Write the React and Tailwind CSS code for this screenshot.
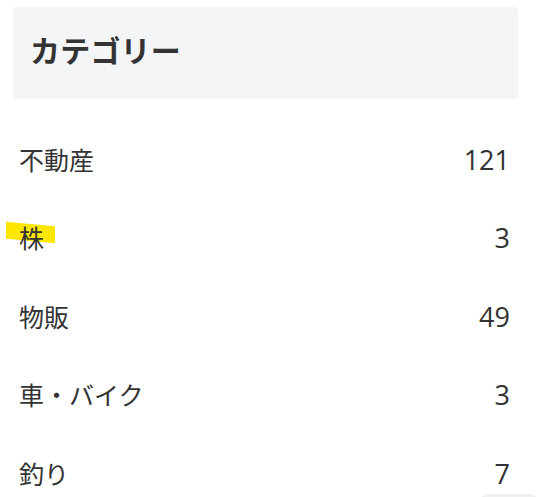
export default function App() {
  const rows = [
    { name: "不動産", count: 121 },
    { name: "株", count: 3, mark: true },
    { name: "物販", count: 49 },
    { name: "車・バイク", count: 3 },
    { name: "釣り", count: 7 },
  ];
  return (
    <div
      className="relative w-[546px] h-[497px] overflow-hidden bg-white text-[#333]"
      style={{ fontFamily: '"Noto Sans CJK JP", "Noto Sans", sans-serif' }}
    >
      <div className="pl-[13px] pt-[7px] w-[518px]">
        <div className="h-[92px] rounded bg-[#f4f5f7] flex items-center pl-[17px] pb-[8px]">
          <h2 className="text-[30px] font-bold leading-none tracking-[0.2px]">カテゴリー</h2>
        </div>
        <ul className="mt-[21px]">
          {rows.map((r) => (
            <li
              key={r.name}
              className="h-[78.5px] flex items-center justify-between pl-[6px] pr-[8px] text-[25px]"
            >
              <span className="relative">
                {r.mark && (
                  <span className="absolute left-[-13px] top-[5px] w-[49px] h-[17px] bg-[#ffe600] skew-y-[5deg]" />
                )}
                <span className="relative">{r.name}</span>
              </span>
              <span
                className="text-[27px] leading-none"
                style={{ fontFamily: '"Open Sans", "Noto Sans", sans-serif' }}
              >
                {r.count}
              </span>
            </li>
          ))}
        </ul>
      </div>
      <div className="absolute left-[480px] top-[494px] w-[58px] h-[40px] rounded-lg bg-[#f0f0f0]" />
    </div>
  );
}
